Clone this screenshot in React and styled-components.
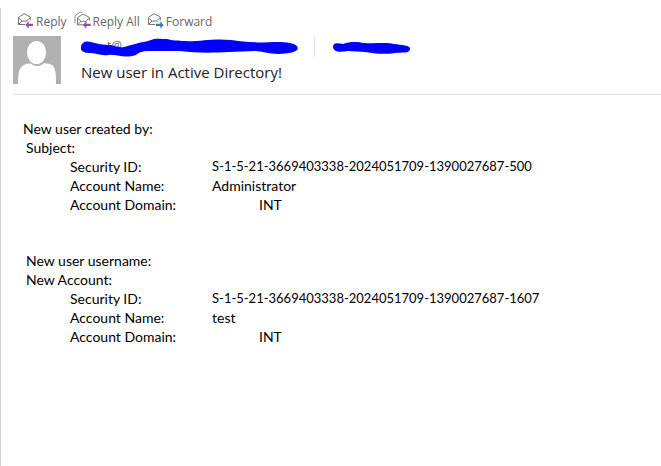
import styled, { createGlobalStyle } from "styled-components";

const events = [
  {
    title: "New user created by:",
    section: "Subject:",
    rows: [
      { label: "Security ID:", value: "S-1-5-21-3669403338-2024051709-1390027687-500", numeric: true },
      { label: "Account Name:", value: "Administrator" },
      { label: "Account Domain:", value: "INT", indent: true },
    ],
  },
  {
    title: "New user username:",
    section: "New Account:",
    nested: true,
    rows: [
      { label: "Security ID:", value: "S-1-5-21-3669403338-2024051709-1390027687-1607", numeric: true },
      { label: "Account Name:", value: "test" },
      { label: "Account Domain:", value: "INT", indent: true },
    ],
  },
];

const Envelope = () => (
  <path
    d="M1.5 13 L18 2 L37 12 V22 M1.5 13 V34.5 H22 M2 34 L12 24 H25 L29 27 M2 15 L12 24 M25 24 L36 15"
    fill="none"
    stroke="#777"
    strokeWidth="3"
  />
);

const ReplyIcon = () => (
  <Icon viewBox="0 0 48 48" aria-hidden="true">
    <Envelope />
    <path d="M22 36 L32 25 V32 H45 V39 H32 V47 Z" fill="#8653ad" />
  </Icon>
);

const ReplyAllIcon = () => (
  <Icon viewBox="0 0 48 48" aria-hidden="true">
    <path d="M0 31 V8 L16 -3 L21 -1" fill="none" stroke="#777" strokeWidth="2.5" />
    <g transform="translate(6 1)">
      <Envelope />
    </g>
    <path d="M24 36 L34 25 V32 H47 V39 H34 V47 Z" fill="#8653ad" />
  </Icon>
);

const ForwardIcon = () => (
  <Icon viewBox="0 0 48 48" aria-hidden="true">
    <Envelope />
    <path d="M47 36 L37 25 V32 H24 V39 H37 V47 Z" fill="#3d78b4" />
  </Icon>
);

const App = () => {
  return (
    <>
      <GlobalStyle />
      <ReadingPane>
        <Toolbar>
          <ActionButton type="button">
            <ReplyIcon />
            Reply
          </ActionButton>
          <ActionButton type="button">
            <ReplyAllIcon />
            Reply All
          </ActionButton>
          <ActionButton type="button">
            <ForwardIcon />
            Forward
          </ActionButton>
        </Toolbar>
        <Header>
          <Avatar viewBox="0 0 48 48" role="img" aria-label="Sender">
            <rect width="48" height="48" fill="#b1b1b1" />
            <path
              d="M5 48 C5 38 6 31 11 29 C14 27 16 28 18 27 C21 31 28 31 31 27 C34 28 36 27 39 29 C43 32 43 39 43 48 Z"
              fill="#fff"
            />
            <ellipse cx="23.5" cy="16.5" rx="11" ry="13" fill="#b1b1b1" />
            <ellipse cx="23.5" cy="16.5" rx="9.5" ry="11.5" fill="#fff" />
          </Avatar>
          <HeaderText>
            <SenderRow>
              <Sender>
                t@
                <SenderMark viewBox="0 0 218 22" aria-hidden="true">
                  <path
                    d="M0 11 C1 5 6 5 10 6 C17 8 22 9 30 9 C35 10 38 12 43 11 L54 8 C60 6 65 6 70 4 C74 2 79 3 86 3 C92 5 96 4 101 5 C120 6 130 2 150 4 C163 6 180 7 193 6 C201 6 212 6 216 10 C220 16 208 17 198 18 C186 18 182 15 174 15 L148 16 C130 17 115 17 99 15 L65 15 C59 16 59 16 55 19 C43 23 35 18 27 19 C20 20 14 17 9 17 C3 17 -1 15 0 11 Z"
                    fill="#00f"
                  />
                </SenderMark>
              </Sender>
              <RecipientMark viewBox="0 0 78 22" aria-hidden="true">
                <path
                  d="M0 11 C0 6 5 7 10 8 C18 5 25 6 31 7 C43 8 53 6 61 8 C68 9 78 9 77 13 C77 18 68 16 62 17 C50 19 39 17 32 16 L15 15 C8 16 1 17 0 11 Z"
                  fill="#00f"
                />
              </RecipientMark>
            </SenderRow>
            <Subject>New user in Active Directory!</Subject>
          </HeaderText>
        </Header>
        <Message>
          {events.map((event) => (
            <section key={event.title}>
              <Line $nested={event.nested}>{event.title}</Line>
              <Line $nested>{event.section}</Line>
              <Details>
                <tbody>
                  {event.rows.map((row) => (
                    <tr key={row.label}>
                      <Label scope="row">{row.label}</Label>
                      <Value $indent={row.indent} $numeric={row.numeric}>
                        {row.value}
                      </Value>
                    </tr>
                  ))}
                </tbody>
              </Details>
            </section>
          ))}
        </Message>
      </ReadingPane>
    </>
  );
};

export default App;

const GlobalStyle = createGlobalStyle`
  * {
    box-sizing: border-box;
  }

  body {
    margin: 0;
    background-color: #fff;
  }
`;

const ReadingPane = styled.main`
  min-height: calc(100vh - 8px);
  margin-top: 8px;
  border-left: 1px solid #d0d0d0;
  padding-left: 12px;
  font-family: "Open Sans", "Noto Sans", sans-serif;
`;

const Toolbar = styled.div`
  display: flex;
  align-items: center;
  gap: 8px;
  height: 26px;
  margin-bottom: 2px;
  padding-left: 5px;
`;

const ActionButton = styled.button`
  display: flex;
  align-items: center;
  gap: 2px;
  height: 24px;
  padding: 0;
  border: 0;
  background: none;
  color: #666;
  font-family: inherit;
  font-size: 12px;
  white-space: nowrap;
  cursor: pointer;
`;

const Icon = styled.svg`
  width: 16px;
  height: 16px;
  flex-shrink: 0;
  overflow: visible;
`;

const Header = styled.header`
  display: flex;
  gap: 20px;
  height: 59px;
  border-bottom: 1px solid #e1e1e1;
`;

const Avatar = styled.svg`
  width: 48px;
  height: 48px;
  flex-shrink: 0;
`;

const HeaderText = styled.div`
  flex: 1;
`;

const SenderRow = styled.div`
  display: flex;
  height: 21px;
`;

const Sender = styled.div`
  position: relative;
  width: 234px;
  padding-left: 26px;
  border-right: 1px solid #e1e1e1;
  color: #666;
  font-size: 12px;
  line-height: 20px;
`;

const SenderMark = styled.svg`
  position: absolute;
  top: 0;
  left: 0;
  width: 218px;
  height: 22px;
`;

const RecipientMark = styled.svg`
  width: 78px;
  height: 22px;
  margin-left: 18px;
`;

const Subject = styled.h1`
  margin: 5px 0 0;
  color: #222;
  font-size: 15px;
  font-weight: 500;
  line-height: 20px;
`;

const Message = styled.article`
  display: flex;
  flex-direction: column;
  gap: 37px;
  padding: 24px 10px;
  color: #000;
  font-family: Lato, sans-serif;
  font-size: 14px;
  line-height: 19px;
`;

const Line = styled.p`
  margin: 0;
  padding-left: ${({ $nested }) => ($nested ? "3px" : "0")};
`;

const Details = styled.table`
  margin-left: 47px;
  border-collapse: collapse;
`;

const Label = styled.th`
  width: 142px;
  padding: 0;
  font-weight: 400;
  text-align: left;
`;

const Value = styled.td`
  padding: 0 0 0 ${({ $indent }) => ($indent ? "47px" : "0")};
  font-size: ${({ $numeric }) => ($numeric ? "13px" : "14px")};
`;
